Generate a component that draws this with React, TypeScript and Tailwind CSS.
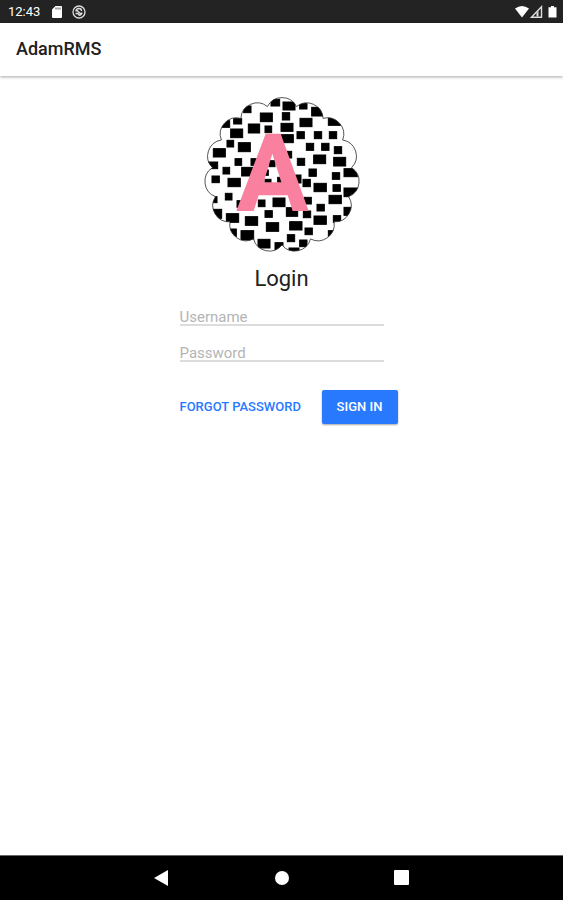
const NOTCH_COUNT = 15;
const CX = 255;
const CY = 255;

const scallop = (() => {
  const points = Array.from({ length: NOTCH_COUNT }, (_, i) => {
    const a = Math.PI / 2 + (i * 2 * Math.PI) / NOTCH_COUNT;
    return `${(CX + 210 * Math.cos(a)).toFixed(1)} ${(CY + 210 * Math.sin(a)).toFixed(1)}`;
  });
  return `M${points[0]}` + [...points.slice(1), points[0]].map((p) => `A49 49 0 0 1 ${p}`).join("") + "Z";
})();

const blocks: [number, number, number, number][] = [
  [222, 28, 26, 20], [258, 36, 36, 24], [140, 48, 22, 20], [190, 69, 36, 26], [110, 86, 24, 16],
  [154, 102, 34, 27], [204, 108, 20, 20], [252, 100, 36, 24], [76, 92, 22, 20], [101, 117, 36, 26],
  [90, 151, 20, 20], [124, 158, 36, 27], [49, 176, 36, 25], [114, 206, 20, 20], [162, 206, 20, 20],
  [134, 232, 36, 26], [78, 232, 20, 20], [34, 216, 28, 20], [216, 212, 18, 18], [256, 68, 22, 22],
  [308, 41, 22, 16], [344, 52, 36, 26], [309, 85, 36, 25], [394, 82, 36, 24], [253, 134, 36, 24],
  [300, 125, 22, 21], [352, 125, 22, 21], [397, 125, 22, 21], [328, 160, 22, 21], [374, 160, 22, 21],
  [412, 170, 22, 21], [350, 195, 36, 26], [410, 202, 36, 26], [301, 205, 22, 21], [264, 184, 20, 20],
  [336, 237, 22, 22], [406, 248, 22, 20], [441, 236, 40, 24], [351, 280, 37, 25], [408, 284, 22, 20],
  [318, 268, 22, 22], [294, 255, 18, 24], [396, 316, 37, 25], [441, 294, 40, 26], [441, 352, 24, 24],
  [321, 322, 22, 20], [360, 343, 22, 20], [319, 363, 22, 20], [351, 378, 37, 25], [409, 377, 22, 20],
  [268, 353, 34, 26], [278, 395, 37, 25], [324, 414, 22, 20], [271, 434, 22, 21], [308, 450, 22, 20],
  [394, 422, 20, 22], [276, 474, 30, 14], [228, 324, 36, 26], [234, 458, 24, 24], [45, 258, 22, 20],
  [93, 265, 37, 25], [85, 310, 20, 20], [42, 320, 18, 18], [120, 332, 20, 20], [184, 330, 20, 20],
  [204, 362, 22, 20], [208, 398, 37, 26], [145, 380, 37, 26], [88, 371, 37, 26], [44, 358, 30, 27],
  [100, 417, 18, 22], [132, 422, 38, 28], [183, 448, 36, 26], [202, 240, 12, 16], [204, 268, 18, 12],
  [242, 262, 12, 16],
];

function Logo() {
  return (
    <svg viewBox="0 0 510 498" className="h-[166px] w-[170px]" role="img" aria-label="AdamRMS logo">
      <clipPath id="badge">
        <path d={scallop} />
      </clipPath>
      <g clipPath="url(#badge)" stroke="#000" strokeWidth="3">
        {blocks.map(([x, y, w, h]) => (
          <rect key={`${x}-${y}`} x={x} y={y} width={w} height={h} />
        ))}
      </g>
      <path d={scallop} fill="none" stroke="#333" strokeWidth="2.5" />
      <path
        d="M206 131H251L335 363H287L272 316H185L170 363H118ZM226 191L200 277H253Z"
        fill="#f9809f"
        fillRule="evenodd"
      />
    </svg>
  );
}

function StatusBar() {
  return (
    <div className="flex h-[23px] items-center bg-[#232323] pr-1 pl-2 text-[13px] text-white">
      <span>12:43</span>
      <svg className="ml-3 h-3 w-[10px]" viewBox="0 0 10 12" fill="#fff">
        <path fillRule="evenodd" d="M3.5 0H9Q10 0 10 1V11Q10 12 9 12H1Q0 12 0 11V3.500ZM3.600 1.500V3.500H4.400V1.500ZM5.600 1.500V3.500H6.400V1.500ZM7.600 1.500V3.500H8.400V1.500Z" />
      </svg>
      <svg className="ml-[10px] h-[14px] w-[14px]" viewBox="0 0 14 14" fill="none" stroke="#ddd">
        <circle cx="7" cy="7" r="6" strokeWidth="1.300" />
        <path d="M4 6.500Q4 3.500 7 3.500Q9.500 3.500 9.500 6M4.500 5L9.500 9.500M10 7.500Q9.500 10 7 10.300M3.500 8.500H6L7 10" strokeWidth="1.400" />
      </svg>
      <svg className="ml-auto h-[14px] w-[44px]" viewBox="0 0 44 14">
        <path d="M0 3.500Q7 -1.500 14 3.500L7 12.500Z" fill="#fff" />
        <path d="M16.500 12.300L26.500 1.800V12.300Z" fill="none" stroke="#ddd" strokeWidth="1.400" />
        <path d="M21.500 11.500V8L23.500 6V11.500Z" fill="#ddd" />
        <path d="M36 1H39V2.200H41.500V12.500H33.500V2.200H36Z" fill="#fff" />
      </svg>
    </div>
  );
}

function Field({ label, type }: { label: string; type: string }) {
  return (
    <div className="h-9">
      <input
        type={type}
        aria-label={label}
        placeholder={label}
        className="block h-[22px] w-full bg-[linear-gradient(#dcdcdc,#dcdcdc)] bg-[length:100%_2px] bg-[position:0_18px] bg-no-repeat p-0 text-[15px] leading-[22px] outline-none placeholder:text-[#b4b4b4]"
      />
    </div>
  );
}

export default function App() {
  return (
    <div className="flex min-h-screen flex-col bg-white font-[Roboto,sans-serif] text-[#212121]">
      <StatusBar />
      <header className="flex h-[53px] items-center px-4 pb-0.5 shadow-[0_1px_3px_rgba(0,0,0,0.35)]">
        <h1 className="text-lg font-medium">AdamRMS</h1>
      </header>
      <main className="flex flex-1 flex-col items-center pt-[14px]">
        <Logo />
        <h2 className="mt-[9px] text-[22px] leading-7">Login</h2>
        <form className="mt-[13px] w-[204px]">
          <Field label="Username" type="text" />
          <Field label="Password" type="password" />
          <div className="mt-3 flex w-[218px] items-center justify-between text-[13px] font-medium">
            <button type="button" className="h-[34px] text-[#2979ff]">FORGOT PASSWORD</button>
            <button type="submit" className="h-[34px] w-[76px] rounded-xs bg-[#2979ff] text-white shadow-[0_1px_2px_rgba(0,0,0,0.35)]">SIGN IN</button>
          </div>
        </form>
      </main>
      <nav className="flex h-[45px] items-center justify-center gap-[104px] border-t border-[#666] bg-black">
        <button type="button" aria-label="Back">
          <svg className="h-4 w-4" viewBox="0 0 16 16" fill="#fff"><path d="M14 0V16L0 8Z" /></svg>
        </button>
        <button type="button" aria-label="Home">
          <svg className="h-4 w-4" viewBox="0 0 16 16" fill="#fff"><circle cx="8" cy="8" r="7" /></svg>
        </button>
        <button type="button" aria-label="Recent apps">
          <svg className="h-4 w-4" viewBox="0 0 16 16" fill="#fff"><rect x="0" y="0" width="15" height="15" rx="1" /></svg>
        </button>
      </nav>
    </div>
  );
}
